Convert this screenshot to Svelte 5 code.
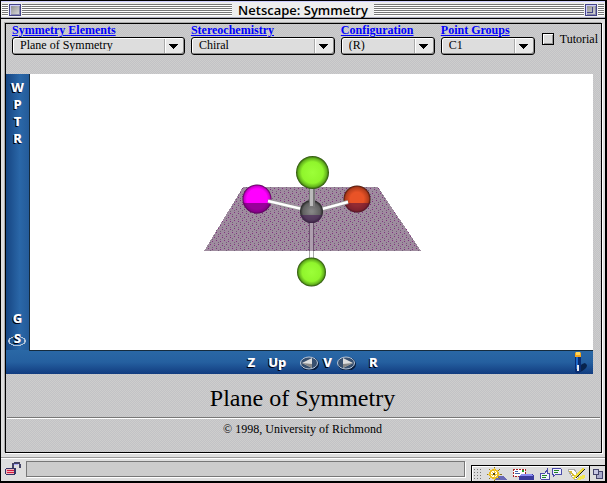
<script>
  const menus = [
    { id: 'elements', label: 'Symmetry Elements', grow: 173, options: ['Plane of Symmetry'] },
    { id: 'stereo', label: 'Stereochemistry', grow: 144, options: ['Chiral'] },
    { id: 'config', label: 'Configuration', grow: 94, options: ['(R)'] },
    { id: 'groups', label: 'Point Groups', grow: 94, options: ['C1'] },
  ];

  const movement = ['W', 'P', 'T', 'R'];

  let selected = $state(menus.map((m) => m.options[0]));
  let tutorial = $state(false);
</script>

<div class="window">
  <header class="titlebar">
    <button class="box" aria-label="Close"></button>
    <span class="stripes"></span>
    <h1>Netscape: Symmetry</h1>
    <span class="stripes"></span>
    <button class="box zoom" aria-label="Zoom"><span></span></button>
  </header>

  <main class="page">
    <form class="menus">
      {#each menus as menu, i}
        <div class="menu" style="flex-grow: {menu.grow}">
          <a href="#{menu.id}" id="{menu.id}-label">{menu.label}</a>
          <div class="select-wrap">
            <select aria-labelledby="{menu.id}-label" bind:value={selected[i]}>
              {#each menu.options as option}
                <option value={option}>{option}</option>
              {/each}
            </select>
            <svg class="arrow" width="9" height="5" viewBox="0 0 9 5" shape-rendering="crispEdges"><path d="M0 0h9L5 5H4z" /></svg>
          </div>
        </div>
      {/each}
      <label class="tutorial"><input type="checkbox" bind:checked={tutorial} />Tutorial</label>
    </form>

    <section class="viewer">
      <nav class="side" aria-label="Movement">
        {#each movement as key}
          <button class="tool">{key}</button>
        {/each}
        <span class="spacer"></span>
        <button class="tool">G</button>
        <button class="tool ringed">S</button>
      </nav>

      <div class="stage">
        <svg width="218" height="150" viewBox="203 137 218 150" role="img" aria-label="Molecule with a plane of symmetry">
          <defs>
            <pattern id="dither" width="8" height="8" patternUnits="userSpaceOnUse">
              <rect width="8" height="8" fill="#9f8c9f" />
              <path d="M0 0h1v1H0zM4 1h1v1H4zM2 4h1v1H2zM6 5h1v1H6z" fill="#80307f" />
              <path d="M2 2h1v1H2zM6 3h1v1H6zM0 6h1v1H0zM4 7h1v1H4z" fill="#75607a" />
            </pattern>
            <radialGradient id="green">
              <stop offset="0" stop-color="#9cff38" /><stop offset=".65" stop-color="#90f52c" />
              <stop offset=".86" stop-color="#65b51d" /><stop offset="1" stop-color="#284b0b" />
            </radialGradient>
            <radialGradient id="magenta">
              <stop offset=".7" stop-color="#ff00ff" /><stop offset=".88" stop-color="#cc00cc" /><stop offset="1" stop-color="#4c004c" />
            </radialGradient>
            <radialGradient id="red">
              <stop offset=".5" stop-color="#e95327" /><stop offset=".85" stop-color="#b33c1c" /><stop offset="1" stop-color="#42150b" />
            </radialGradient>
            <radialGradient id="grey">
              <stop offset=".1" stop-color="#858585" /><stop offset=".75" stop-color="#606060" /><stop offset="1" stop-color="#222" />
            </radialGradient>
            <clipPath id="below-magenta"><path d="M240 203h34v14h-34z" /></clipPath>
            <clipPath id="below-red"><path d="M340 203h34v14h-34z" /></clipPath>
            <clipPath id="below-grey"><path d="M298 215h28v12h-28z" /></clipPath>
          </defs>
          <path d="M243 187h135l43 64H204z" fill="url(#dither)" shape-rendering="crispEdges" />
          <path d="M309 220h5v31h-5z" fill="#ae9eae" />
          <path d="M309.500 220v31M313.500 220v31" stroke="#6d536f" />
          <path d="M309 251h5v8h-5z" fill="#fff" />
          <path d="M309.500 251v8M313.500 251v8" stroke="#aaa" />
          <circle cx="257" cy="199" r="14.5" fill="url(#magenta)" />
          <circle cx="257" cy="199" r="14.5" fill="#620065" fill-opacity=".65" clip-path="url(#below-magenta)" />
          <circle cx="357" cy="199" r="13.5" fill="url(#red)" />
          <circle cx="357" cy="199" r="13.5" fill="#59103a" fill-opacity=".6" clip-path="url(#below-red)" />
          <path d="M268 201l34 8M348 202l-26 7" stroke="#999" stroke-width="4" />
          <path d="M268 201l34 8M348 202l-26 7" stroke="#fff" stroke-width="2.5" />
          <circle cx="311.5" cy="211.5" r="11.5" fill="url(#grey)" />
          <circle cx="311.5" cy="211.5" r="11.5" fill="#4a2058" fill-opacity=".6" clip-path="url(#below-grey)" />
          <path d="M309 186h6v21h-6z" fill="#777" />
          <path d="M310 186h3v20h-3z" fill="#bbb" />
          <circle cx="312.5" cy="172.5" r="16.5" fill="url(#green)" />
          <circle cx="311.5" cy="272" r="14.5" fill="url(#green)" />
        </svg>
      </div>

      <nav class="bottom" aria-label="View">
        <span class="corner"></span>
        <div class="controls">
          <button class="tool">Z</button>
          <button class="tool">Up</button>
          <div class="views">
            <button class="oval" aria-label="Previous view">
              <svg width="20" height="14" viewBox="0 0 20 14">
                <ellipse cx="11" cy="8" rx="8" ry="6" fill="none" stroke="#081c3c" stroke-width="2" />
                <ellipse cx="10" cy="7" rx="8.5" ry="6" fill="#38506f" stroke="#b9c7d8" />
                <path d="M3 7l10-5v10z" fill="#ddd" /><path d="M3 7l10 5V8z" fill="#888" />
              </svg>
            </button>
            <button class="tool">V</button>
            <button class="oval" aria-label="Next view">
              <svg width="20" height="14" viewBox="0 0 20 14">
                <ellipse cx="11" cy="8" rx="8" ry="6" fill="none" stroke="#081c3c" stroke-width="2" />
                <ellipse cx="10" cy="7" rx="8.5" ry="6" fill="#38506f" stroke="#b9c7d8" />
                <path d="M17 7L7 2v10z" fill="#ddd" /><path d="M17 7L7 12V8z" fill="#888" />
              </svg>
            </button>
          </div>
          <button class="tool">R</button>
        </div>
        <button class="torch" aria-label="Headlight">
          <svg width="20" height="22" viewBox="0 0 20 22">
            <path d="M9 19c1-5 3-7 7-8l2 2c0 4-5 6-9 8z" fill="#08244d" />
            <path d="M6 5h6v14l-2 2H7l-1-2z" fill="#092d73" />
            <path d="M7 5h2v12H7z" fill="#1c68c8" /><path d="M8 13h2v6H8z" fill="#e3e8ef" />
            <path d="M6 1l1-1h4l1 1v4H6z" fill="#f3a51d" /><path d="M7 0h4v3H7z" fill="#ffd65a" />
          </svg>
        </button>
      </nav>
    </section>

    <h2>Plane of Symmetry</h2>
    <hr />
    <p>© 1998, University of Richmond</p>
  </main>

  <footer class="status">
    <button class="lock" aria-label="Security">
      <svg width="16" height="14" viewBox="0 0 16 14" shape-rendering="crispEdges">
        <path d="M8 6V2l2-1h4l1 2v3" fill="none" stroke="#446" stroke-width="2" />
        <path d="M9 2h4v1H9z" fill="#aaf" />
        <path d="M1 6h9l1 1v5l-2 1H2l-2-1V7z" fill="#336" />
        <path d="M1 7h8v5H1z" fill="#f4b6ba" /><path d="M2 8h7v1H2zM2 10h7v1H2z" fill="#d11c42" />
      </svg>
    </button>
    <output class="message"></output>
    <div class="components">
      <span class="grip"></span>
      <button aria-label="Navigator">
        <svg width="21" height="14" viewBox="0 0 21 14" shape-rendering="crispEdges">
          <path d="M10 9h7l4 4H8z" fill="#6969b5" />
          <path d="M8 0v14M1 7h15M3 2l11 10M14 2L3 12" stroke="#8a741f" />
          <circle cx="8" cy="7" r="4" fill="#fff" stroke="#e9b91c" stroke-width="2" />
          <path d="M8 1v12M2 7h12M4 3l8 8M12 3l-8 8" stroke="#f3ca36" />
          <path d="M7 6h2v2H7z" fill="#554311" />
        </svg>
      </button>
      <button aria-label="Mailbox">
        <svg width="22" height="14" viewBox="0 0 22 14" shape-rendering="crispEdges">
          <path d="M1 2h12v7H1z" fill="#fff" stroke="#a22" stroke-dasharray="2 1" />
          <path d="M3 4h3v1H3zM3 6h5v1H3z" fill="#46a" /><path d="M10 3h2v2h-2z" fill="#292" />
          <path d="M9 7h11l2 2v4H7V9z" fill="#3b3b9c" /><path d="M9 7h11l1 2H8z" fill="#8d8df2" />
        </svg>
      </button>
      <button aria-label="Discussions">
        <svg width="23" height="14" viewBox="0 0 23 14" shape-rendering="crispEdges">
          <path d="M1 6h5l2-3v3h2v6H2L1 11z" fill="#efefff" stroke="#4b4ba8" />
          <path d="M3 8h5M3 10h4" stroke="#282" />
          <path d="M13 1h8l1 1v5h-5l-3 3V7h-1z" fill="#efefff" stroke="#4b4ba8" />
          <path d="M15 3h5M15 5h4" stroke="#282" />
        </svg>
      </button>
      <button aria-label="Composer">
        <svg width="19" height="14" viewBox="0 0 19 14" shape-rendering="crispEdges">
          <path d="M8 12l8-4h2v3l-6 2H8z" fill="#f4ea50" />
          <path d="M1 3l6-1 5 8-3 3-4-3z" fill="#fff" stroke="#aaa" />
          <path d="M6 10l9-9 3 1-8 9-4 1z" fill="#efdc38" />
          <path d="M9 11l9-9" stroke="#252515" />
          <path d="M3 4l4 5" stroke="#d6bb3a" stroke-width="2" />
        </svg>
      </button>
    </div>
    <svg class="resize" width="15" height="15" viewBox="0 0 15 15" shape-rendering="crispEdges">
      <path d="M6.500 5.500h6v7h-6z" fill="#aaaacb" stroke="#43436b" />
      <path d="M3.500 3.500h5v5h-5z" fill="#c8c8e4" stroke="#43436b" />
    </svg>
  </footer>
</div>

<style>
  :global(body) {
    margin: 0;
    background: #000;
  }

  .window {
    box-sizing: border-box;
    display: flex;
    flex-direction: column;
    min-height: 100vh;
    border: 1px solid #000;
    border-width: 1px 2px 2px 1px;
    background: #dedede;
    color: #000;
    font-family: "Liberation Serif", serif;
    font-size: 12px;
  }

  button {
    padding: 0;
    border: 0;
    background: none;
    font: inherit;
    color: inherit;
  }

  svg {
    display: block;
  }

  .titlebar {
    display: flex;
    align-items: center;
    box-sizing: border-box;
    height: 18px;
    padding: 0 1px;
    border-top: 1px solid #ccf;
    border-bottom: 1px solid #000;
    background: #eee;
    box-shadow: inset 0 -1px #aab;
  }

  .titlebar::before,
  .titlebar::after {
    content: '';
    width: 6px;
    height: 12px;
    background: repeating-linear-gradient(#777 0 1px, #fff 1px 2px);
  }

  .titlebar::before {
    margin-right: 1px;
  }

  .titlebar::after {
    margin-left: 1px;
  }

  .stripes {
    flex: 1;
    height: 12px;
    margin: 0 1px;
    background: repeating-linear-gradient(#777 0 1px, #fff 1px 2px);
  }

  .titlebar h1 {
    margin: 0 5px;
    font: 600 13px/16px "Open Sans", sans-serif;
  }

  .box {
    width: 12px;
    height: 12px;
    border: 1px solid #448;
    background: linear-gradient(135deg, #888, #ddd);
    box-shadow: inset 1px 1px #ccf, inset -1px -1px #88a;
  }

  .zoom span {
    display: block;
    width: 5px;
    height: 5px;
    margin: 1px;
    border: solid #448;
    border-width: 0 1px 1px 0;
  }

  .page {
    flex: 1;
    margin: 4px 3px 4px 4px;
    border: 1px solid #000;
    background: repeating-conic-gradient(#c2c2c6 0 25%, #cececd 0 50%) 0 0 / 2px 2px;
    box-shadow: -1px -1px #aaa, 1px 1px #fff;
  }

  .menus {
    display: flex;
    gap: 6px;
    height: 50px;
    padding: 0 3px 0 6px;
  }

  .menu {
    flex: 1 1 0;
    min-width: 0;
  }

  .menu a {
    display: block;
    font-size: 12px;
    font-weight: bold;
    line-height: 13px;
    color: #00f;
    white-space: nowrap;
  }

  .select-wrap {
    display: grid;
    align-items: center;
  }

  select {
    grid-area: 1 / 1;
    width: 100%;
    height: 18px;
    padding: 0 20px 3px 7px;
    border: 1px solid #000;
    border-radius: 3px;
    appearance: none;
    background: linear-gradient(90deg, #aaa 1px, #fff 1px 2px, #e8e8e8 2px) right / 20px 100% no-repeat, #ddd;
    box-shadow: inset 1px 1px #fff, inset -1px -1px #888;
    color: #000;
    font: 12px/14px "Liberation Serif", serif;
  }

  .arrow {
    grid-area: 1 / 1;
    justify-self: end;
    margin-right: 7px;
    pointer-events: none;
  }

  .tutorial {
    display: flex;
    align-items: center;
    gap: 6px;
    height: 30px;
    padding-left: 1px;
  }

  .tutorial input {
    width: 12px;
    height: 12px;
    margin: 0;
    border: 1px solid #000;
    appearance: none;
    background: #ddd;
    box-shadow: inset 1px 1px #fff, inset -1px -1px #999;
  }

  .tutorial input:checked {
    background: #448;
  }

  .viewer {
    display: grid;
    grid-template: minmax(276px, 1fr) 24px / 24px 1fr;
    margin-right: 8px;
  }

  .side {
    display: flex;
    flex-direction: column;
    align-items: center;
    box-sizing: border-box;
    padding: 5px 0 2px;
    border-right: 1px solid #152b3d;
    background: linear-gradient(90deg, #164582, #2a67a8 60%, #245b99);
  }

  .spacer {
    flex: 1;
  }

  .tool {
    height: 17px;
    color: #fff;
    font: 800 13px/17px "Noto Sans", sans-serif;
    text-shadow: -1px 1px #001;
  }

  .side .tool + .spacer + .tool {
    margin-bottom: 2px;
  }

  .ringed {
    width: 19px;
    height: 19px;
    background: radial-gradient(9px 5px at 9px 12px, transparent 78%, #b4c5da 82% 98%, transparent 100%);
  }

  .stage {
    display: flex;
    align-items: center;
    justify-content: center;
    background: #fff;
  }

  .bottom {
    grid-column: 1 / 3;
    display: grid;
    grid-template-columns: 23px 1fr 24px;
    align-items: center;
    background: linear-gradient(#2a68a6, #2560a0 50%, #113c80);
  }

  .corner {
    height: 24px;
  }

  .controls {
    display: flex;
    align-items: center;
    justify-content: center;
    gap: 13px;
    box-sizing: border-box;
    height: 24px;
    padding-left: 27px;
    border-top: 1px solid #152b3d;
  }

  .views {
    display: flex;
    align-items: center;
    gap: 4px;
  }

  .torch {
    display: flex;
    align-items: flex-end;
    height: 24px;
    border-top: 1px solid #152b3d;
  }

  h2 {
    margin: 10px 0 4px;
    padding-right: 2px;
    font-size: 24px;
    font-weight: normal;
    line-height: 29px;
    text-align: center;
  }

  hr {
    margin: 0 1px;
    border: 0;
    border-top: 1px solid #777;
    border-bottom: 1px solid #fff;
  }

  p {
    margin: 3px 0 0;
    padding-right: 2px;
    line-height: 14px;
    text-align: center;
  }

  .status {
    display: flex;
    align-items: flex-end;
    box-sizing: border-box;
    height: 24px;
    padding-left: 4px;
    border-top: 1px solid #999;
    box-shadow: inset 0 1px #fff;
  }

  .lock {
    margin: 0 5px 5px 0;
  }

  .message {
    flex: 1;
    box-sizing: border-box;
    height: 16px;
    margin: 0 6px 4px 0;
    border: 1px solid #777;
    background: #ccc;
    box-shadow: 1px 1px #fff;
  }

  .components {
    display: flex;
    align-items: center;
    gap: 5px;
    box-sizing: border-box;
    height: 16px;
    padding: 0 3px 0 1px;
    border: 1px solid #000;
    border-bottom: 0;
    background: #ddd;
    box-shadow: inset 1px 1px #fff;
  }

  .grip {
    width: 8px;
    height: 12px;
    background: radial-gradient(circle, #777 1px, transparent 1px) 0 0 / 3px 3px;
  }

  .resize {
    border-top: 1px solid #000;
    background: #ddd;
  }
</style>
